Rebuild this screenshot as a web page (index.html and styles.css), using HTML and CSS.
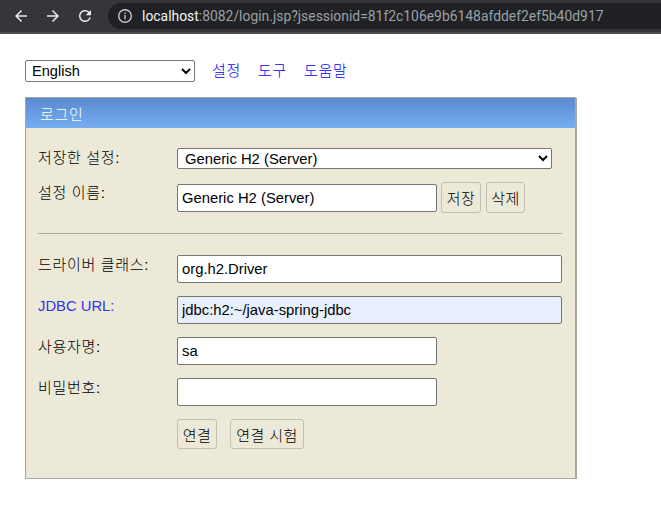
FILE: index.html
```html
<!DOCTYPE html>
<html lang="ko">
<head>
<meta charset="utf-8">
<title>H2 Console</title>
<link rel="stylesheet" href="styles.css">
</head>
<body>
<div class="chrome">
  <div class="nav">
    <svg class="nav-icon" viewBox="0 0 24 24" width="18" height="18"><path d="M20 11H7.83l5.59-5.59L12 4l-8 8 8 8 1.41-1.41L7.83 13H20v-2z" fill="#e8eaed"/></svg>
    <svg class="nav-icon" viewBox="0 0 24 24" width="18" height="18"><path d="M4 11h12.17l-5.59-5.59L12 4l8 8-8 8-1.41-1.41L16.17 13H4v-2z" fill="#e8eaed"/></svg>
    <svg class="nav-icon" viewBox="0 0 24 24" width="18" height="18"><path d="M17.65 6.35A7.958 7.958 0 0 0 12 4c-4.42 0-7.990 3.58-7.99 8s3.57 8 7.99 8c3.73 0 6.84-2.55 7.73-6h-2.08A5.99 5.99 0 0 1 12 18c-3.31 0-6-2.690-6-6s2.69-6 6-6c1.66 0 3.14.69 4.22 1.78L13 11h7V4l-2.35 2.35z" fill="#e8eaed"/></svg>
  </div>
  <div class="omnibox">
    <svg class="info-icon" viewBox="0 0 16 16" width="16" height="16"><circle cx="8" cy="8" r="6.3" fill="none" stroke="#c4c7ca" stroke-width="1.4"/><rect x="7.3" y="7" width="1.4" height="4.3" fill="#c4c7ca"/><rect x="7.3" y="4.6" width="1.4" height="1.4" fill="#c4c7ca"/></svg>
    <span class="host">localhost</span><span class="path">:8082/login.jsp?jsessionid=81f2c106e9b6148afddef2ef5b40d917</span>
  </div>
</div>

<div class="page">
  <div class="toolbar">
    <select class="lang">
      <option>English</option>
    </select>
    <a class="toplink ko" href="#">설정</a>
    <a class="toplink ko" href="#">도구</a>
    <a class="toplink ko" href="#">도움말</a>
  </div>

  <div class="panel">
    <div class="panel-head ko">로그인</div>
    <div class="panel-body">
      <div class="row row-select">
        <div class="label ko">저장한 설정:</div>
        <select class="wide-select"><option>Generic H2 (Server)</option></select>
      </div>
      <div class="row row-name">
        <div class="label ko">설정 이름:</div>
        <input class="field short" type="text" value="Generic H2 (Server)">
        <button class="btn small">저장</button>
        <button class="btn small del">삭제</button>
      </div>
      <hr class="sep">
      <div class="row">
        <div class="label ko">드라이버 클래스:</div>
        <input class="field long" type="text" value="org.h2.Driver">
      </div>
      <div class="row">
        <div class="label link-label">JDBC URL:</div>
        <input class="field long autofill" type="text" value="jdbc:h2:~/java-spring-jdbc">
      </div>
      <div class="row">
        <div class="label ko">사용자명:</div>
        <input class="field short" type="text" value="sa">
      </div>
      <div class="row">
        <div class="label ko">비밀번호:</div>
        <input class="field short" type="password" value="">
      </div>
      <div class="row row-actions">
        <div class="label"></div>
        <button class="btn act">연결</button>
        <button class="btn act test">연결 시험</button>
      </div>
    </div>
  </div>
</div>
</body>
</html>
```

FILE: styles.css
```css
* { box-sizing: border-box; }

body {
  margin: 0;
  background: #ffffff;
  font-family: "Liberation Sans", Arial, "Noto Sans CJK KR", sans-serif;
  font-size: 14px;
  color: #000;
}

.ko {
  font-size: 15px;
  letter-spacing: 0.7px;
  font-weight: 300;
}

/* browser chrome */
.chrome {
  height: 34px;
  background: #35363a;
  border-bottom: 2px solid #4a4b4f;
  display: flex;
  align-items: center;
}
.nav {
  display: flex;
  align-items: center;
  gap: 14px;
  padding-left: 12px;
  width: 108px;
}
.nav-icon { display: block; }
.omnibox {
  flex: 1;
  height: 26px;
  margin-top: -1px;
  background: #202124;
  border-radius: 13px 0 0 13px;
  display: flex;
  align-items: center;
  padding-left: 9px;
  font-family: Roboto, "Noto Sans", sans-serif;
  font-size: 13.9px;
  white-space: nowrap;
  overflow: hidden;
}
.info-icon { display: block; margin-right: 9px; }
.host { color: #f1f3f4; }
.path { color: #9aa0a6; }

/* page */
.page {
  padding: 26px 25px 0 25px;
}
.toolbar {
  display: flex;
  align-items: center;
  height: 22px;
}
.lang {
  width: 170px;
  height: 22px;
  font-family: "Liberation Sans", Arial, sans-serif;
  font-size: 14.6px;
  padding-left: 2px;
  border: 1px solid #767676;
  border-radius: 2px;
  background: #fff;
  color: #000;
  margin-right: 17px;
}
.toplink {
  color: #0000ff;
  text-decoration: none;
  margin-right: 17px;
  line-height: 18px;
}

.panel {
  margin-top: 15px;
  width: 551px;
  background: #ece9d8;
  border: 1px solid #aca899;
  box-shadow: 1px 1px 0 #aca899;
}
.panel-head {
  height: 30px;
  padding-left: 14px;
  display: flex;
  align-items: center;
  color: #fff;
  background: linear-gradient(to bottom, #5a89cf, #77aef2);
}
.panel-body {
  padding: 20px 13px 29px 12px;
}
.row {
  display: flex;
  align-items: flex-start;
  margin-top: 13px;
}
.row-select { margin-top: 0; }
.label {
  width: 139px;
  flex: none;
  padding-top: 1px;
  line-height: 18px;
  white-space: nowrap;
}
.link-label { color: #3333f2; font-size: 14.8px; }

.wide-select {
  width: 375px;
  height: 21px;
  font-family: "Liberation Sans", Arial, sans-serif;
  font-size: 14.8px;
  padding-left: 3px;
  border: 1px solid #767676;
  border-radius: 2px;
  background: #fff;
  color: #000;
}
.row-name { align-items: center; }
.row-name .label { align-self: flex-start; padding-top: 2px; }

.field {
  height: 28px;
  border: 1px solid #767676;
  border-radius: 2px;
  background: #fff;
  padding: 0 4px;
  font-family: "Liberation Sans", Arial, sans-serif;
  font-size: 14.8px;
  color: #000;
}
.short { width: 260px; }
.long { width: 385px; }
.autofill { background: #e8f0fe; }

.btn {
  background: #ece9d8;
  border: 1px solid #c3c0b3;
  border-radius: 3px;
  font-family: "Liberation Sans", Arial, "Noto Sans CJK KR", sans-serif;
  font-size: 15px;
  font-weight: 300;
  letter-spacing: 0.4px;
  color: #000;
  padding: 0 3px;
}
.small { height: 31px; width: 40px; margin-left: 4px; }
.del { margin-left: 5px; width: 39px; }
.act { height: 30px; width: 40px; }
.test { width: 74px; margin-left: 13px; }

.sep {
  margin: 20px 0 0 0;
  border: 0;
  border-top: 1px solid #a9a7a0;
  height: 0;
}
.sep + .row { margin-top: 21px; }
```
